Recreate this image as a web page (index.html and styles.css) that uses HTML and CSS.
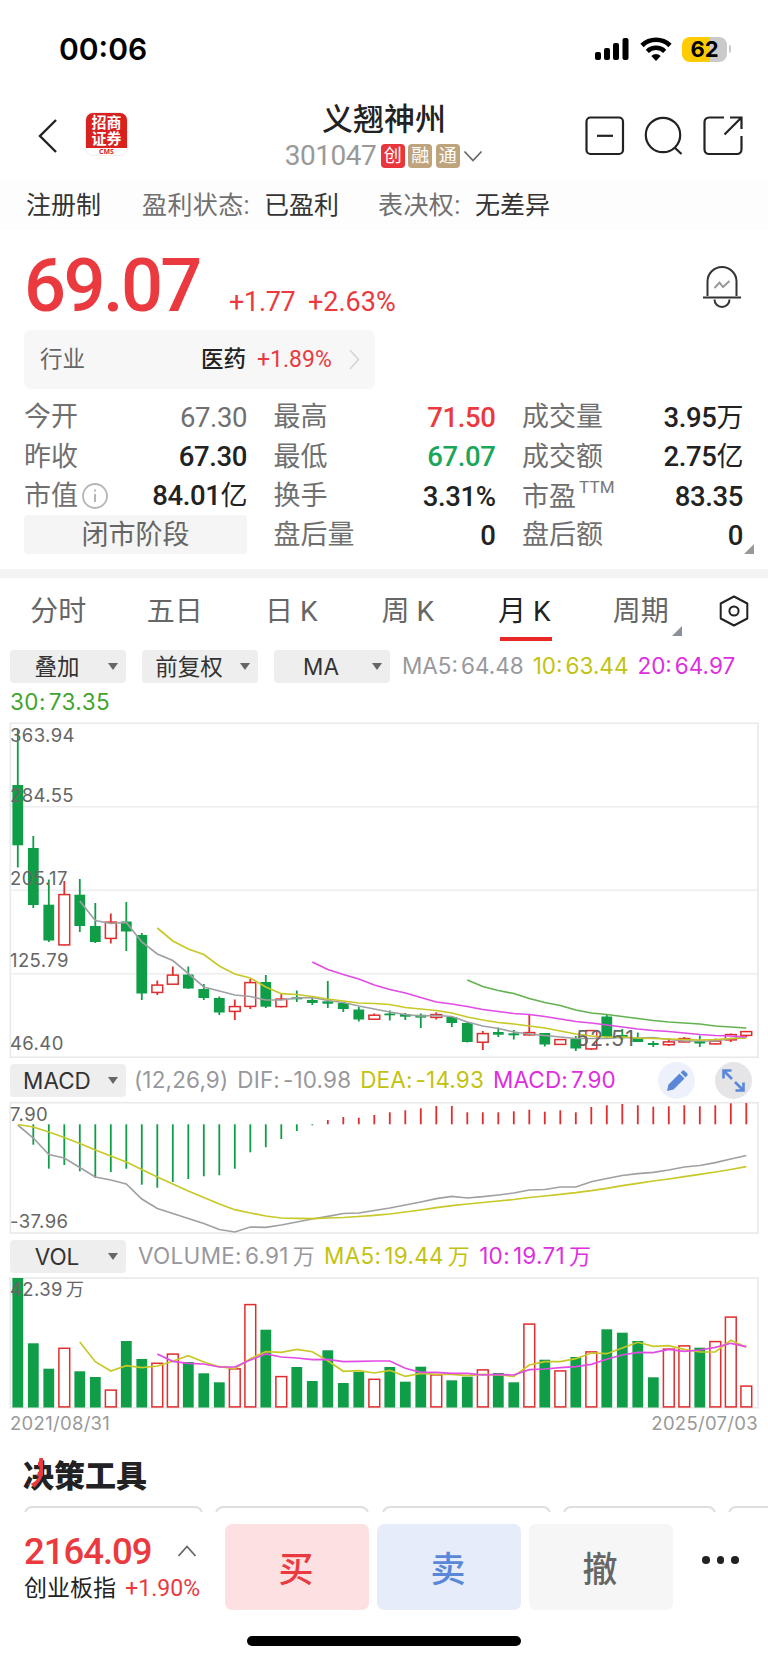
FILE: index.html
```html
<!DOCTYPE html>
<html lang="zh-CN">
<head>
    <meta charset="UTF-8">
    <title>义翘神州 301047</title>
    <link rel="stylesheet" href="styles.css">
</head>
<body>
    <div class="status-bar">
        <span class="time">00:06</span>
        <svg class="signal" width="34" height="22" viewBox="0 0 34 22">
            <rect x="0" y="14" width="6" height="8" rx="2"/>
            <rect x="9" y="10" width="6" height="12" rx="2"/>
            <rect x="18" y="5" width="6" height="17" rx="2"/>
            <rect x="27.500" y="0" width="6" height="22" rx="2"/>
        </svg>
        <svg class="wifi" width="32" height="24" viewBox="0 0 32 24">
            <path d="M2 8.500a20 20 0 0 1 28 0" fill="none" stroke="#000" stroke-width="4.600"/>
            <path d="M7.300 14.300a12.500 12.500 0 0 1 17.400 0" fill="none" stroke="#000" stroke-width="4.400"/>
            <path d="M11.300 19a6.600 6.600 0 0 1 9.400 0L16 24z"/>
        </svg>
        <div class="battery">62</div>
        <div class="battery-tip"></div>
    </div>

    <header class="header">
        <svg class="back" width="20" height="36" viewBox="0 0 20 36"><path d="M18 2L2 18l16 16"/></svg>
        <div class="logo">
            <b>招商<br>证券</b>
            <i>CMS</i>
        </div>
        <div class="title">
            <h1>义翘神州</h1>
            <div class="code">
                <span>301047</span>
                <em class="tag tag-red">创</em>
                <em class="tag">融</em>
                <em class="tag">通</em>
                <svg width="20" height="12" viewBox="0 0 20 12"><path d="M1.500 1.500l8.500 9 8.500-9" fill="none" stroke="#666" stroke-width="1.700"/></svg>
            </div>
        </div>
        <div class="actions">
            <svg width="40" height="40" viewBox="0 0 40 40"><rect x="1.500" y="1.500" width="36.500" height="36.500" rx="4"/><path d="M12 19.800h16"/></svg>
            <svg width="40" height="40" viewBox="0 0 40 40"><circle cx="19" cy="19" r="17.200"/><path d="M30.500 31.500l7 6.500"/></svg>
            <svg width="40" height="40" viewBox="0 0 40 40"><path d="M21 1.500H6a4.500 4.500 0 0 0-4.500 4.500v27.500A4.500 4.500 0 0 0 6 38h28a4.500 4.500 0 0 0 4.500-4.500V20M27 1.500h11.500V13M38 2L21.500 18.500"/></svg>
        </div>
    </header>

    <div class="notice">
        <span class="dark">注册制</span>
        <span class="state">盈利状态:</span>
        <span class="dark">已盈利</span>
        <span class="vote">表决权:</span>
        <span class="dark">无差异</span>
    </div>

    <section class="quote">
        <div class="price-row">
            <span class="price">69.07</span>
            <span class="change">+1.77</span>
            <span class="percent">+2.63%</span>
            <svg class="bell" width="40" height="44" viewBox="0 0 40 44">
                <path d="M5.500 30V15.500a14.500 14.500 0 0 1 29 0V30M1 31.500h38M12.500 33.500a7.500 7.500 0 0 0 15 0" fill="none" stroke="#333" stroke-width="2"/>
                <path d="M12.500 22l5-5.500 3.500 4.500 6.500-6" fill="none" stroke="#999" stroke-width="2"/>
            </svg>
        </div>
        <div class="industry">
            <span>行业</span>
            <b>医药</b>
            <span class="up">+1.89%</span>
            <svg width="11" height="21" viewBox="0 0 11 21"><path d="M1 1l8.500 9.500L1 20" fill="none" stroke="#d4d4d4" stroke-width="1.600"/></svg>
        </div>
        <div class="stats">
            <div class="stat"><label>今开</label><span class="flat">67.30</span></div>
            <div class="stat"><label>最高</label><span class="up">71.50</span></div>
            <div class="stat"><label>成交量</label><span>3.95<u>万</u></span></div>
            <div class="stat"><label>昨收</label><span>67.30</span></div>
            <div class="stat"><label>最低</label><span class="down">67.07</span></div>
            <div class="stat"><label>成交额</label><span>2.75<u>亿</u></span></div>
            <div class="stat"><label>市值</label>
                <svg class="info" width="26" height="26" viewBox="0 0 26 26"><circle cx="13" cy="13" r="12" fill="none" stroke="#b5b5b5" stroke-width="1.800"/><path d="M13 11v8M13 6.500v2" stroke="#b5b5b5" stroke-width="2"/></svg>
                <span>84.01<u>亿</u></span></div>
            <div class="stat"><label>换手</label><span>3.31%</span></div>
            <div class="stat pe"><label>市盈</label><sup>TTM</sup><span>83.35</span></div>
            <div class="phase">闭市阶段</div>
            <div class="stat"><label>盘后量</label><span>0</span></div>
            <div class="stat"><label>盘后额</label><span>0</span></div>
            <div class="corner"></div>
        </div>
    </section>

    <nav class="tabs">
        <a>分时</a>
        <a>五日</a>
        <a>日 K</a>
        <a>周 K</a>
        <a class="active">月 K</a>
        <a class="more">周期</a>
        <svg width="30" height="32" viewBox="0 0 30 32" fill="none" stroke="#222" stroke-width="2"><path d="M15 1.500L28.300 8.500v15L15 30.500 1.700 23.500v-15z" stroke-linejoin="round"/><circle cx="15" cy="16" r="4.600"/></svg>
    </nav>

    <div class="legend">
        <div class="select">叠加</div>
        <div class="select">前复权</div>
        <div class="select">MA</div>
        <span class="c-gray">MA5<i>:</i>64.48</span>
        <span class="c-yellow">10<i>:</i>63.44</span>
        <span class="c-pink">20<i>:</i>64.97</span>
    </div>
    <div class="legend-2"><span class="c-green">30<i>:</i>73.35</span></div>

    <svg id="kline" class="chart" width="768" height="338" viewBox="0 722 768 338"></svg>

    <div class="legend sub">
        <div class="select">MACD</div>
        <span class="c-gray params">(12,26,9)</span>
        <span class="c-gray">DIF<i>:</i>-10.98</span>
        <span class="c-yellow">DEA<i>:</i>-14.93</span>
        <span class="c-pink">MACD<i>:</i>7.90</span>
        <div class="round pencil">
            <svg width="22" height="22" viewBox="0 0 22 22" fill="#5b87d8"><path d="M1 21l1.500-6.500L13.500 3.500l5 5L7.500 19.500zM14.600 2.400l1.800-1.700q1-.8 2 0l2.900 2.900q.8 1 0 2l-1.800 1.800z"/></svg>
        </div>
        <div class="round expand">
            <svg width="23" height="23" viewBox="0 0 23 23" fill="none" stroke="#5b87d8" stroke-width="2.600"><path d="M1.500 9.500v-8h8M2 2l8 8M21.500 13.500v8h-8M21 21l-8-8"/></svg>
        </div>
    </div>
    <svg id="macd" class="chart" width="768" height="136" viewBox="0 1101 768 136"></svg>

    <div class="legend sub vol-legend">
        <div class="select">VOL</div>
        <span class="c-gray">VOLUME<i>:</i>6.91<u>万</u></span>
        <span class="c-yellow">MA5<i>:</i>19.44<u>万</u></span>
        <span class="c-pink">10<i>:</i>19.71<u>万</u></span>
    </div>
    <svg id="vol" class="chart" width="768" height="134" viewBox="0 1276 768 134"></svg>
    <div class="dates"><span>2021/08/31</span><span>2025/07/03</span></div>

    <section class="tools">
        <h2><span class="mark">决</span>策工具</h2>
        <div class="pills">
            <div class="pill p1"></div>
            <div class="pill p2"></div>
            <div class="pill p3"></div>
            <div class="pill p4"></div>
            <div class="pill p5"></div>
        </div>
    </section>

    <footer class="trade">
        <div class="index">
            <div class="index-top">
                <span>2164.09</span>
                <svg width="20" height="12" viewBox="0 0 20 12"><path d="M1.500 11L10 1.500 18.500 11" fill="none" stroke="#666" stroke-width="1.800"/></svg>
            </div>
            <div class="index-name">创业板指 <span>+1.90%</span></div>
        </div>
        <button class="buy">买</button>
        <button class="sell">卖</button>
        <button class="cancel">撤</button>
        <div class="dots"><i></i><i></i><i></i></div>
    </footer>
    <div class="home"></div>

    <script src="charts.js"></script>
</body>
</html>
```
FILE: styles.css
```css
* {
    box-sizing: border-box;
}
body {
    margin: 0;
    width: 768px;
    height: 1663px;
    overflow: hidden;
    background: #fff;
    color: #222;
    font-family: Roboto, "Noto Sans CJK SC", sans-serif;
    line-height: 1;
}
h1, h2 {
    margin: 0;
    font-weight: 500;
}
i, em, u {
    font-style: normal;
    text-decoration: none;
}
.up {
    color: #ea3a40 !important;
}
.down {
    color: #1ba65a !important;
}

/* status bar */
.status-bar {
    display: flex;
    align-items: center;
    height: 98px;
    padding-left: 59px;
}
.time {
    width: 536px;
    font: 600 30px/1 Inter, sans-serif;
    color: #000;
}
.wifi {
    margin-left: 11px;
}
.battery {
    width: 45px;
    height: 25px;
    margin-left: 10px;
    border-radius: 8px;
    background: linear-gradient(90deg, #ffcc00 28px, #cacaca 28px);
    font: 700 22px/25px Inter, sans-serif;
    color: #000;
    text-align: center;
}
.battery-tip {
    width: 2px;
    height: 8px;
    margin-left: 2px;
    border-radius: 0 2px 2px 0;
    background: #cacaca;
}

/* header */
.header {
    display: flex;
    height: 82px;
    padding-left: 38px;
}
.back {
    margin-top: 20px;
    fill: none;
    stroke: #222;
    stroke-width: 2.4;
}
.logo {
    width: 43px;
    height: 44px;
    margin: 14px 0 0 27px;
    border: 1px solid #eee;
    border-radius: 8px;
    background: linear-gradient(#d8221f 35px, #fff 35px);
    text-align: center;
    color: #fff;
    overflow: hidden;
}
.logo b {
    display: block;
    height: 35px;
    padding-top: 2px;
    font-size: 15px;
    line-height: 16px;
}
.logo i {
    display: block;
    font: bold 7px/7px "Open Sans", sans-serif;
    color: #d8221f;
}
.title {
    width: 240px;
    margin-left: 136px;
    padding-top: 6px;
    display: flex;
    flex-direction: column;
    align-items: center;
}
h1 {
    font-size: 31px;
    line-height: 32px;
}
.code {
    display: flex;
    align-items: center;
    margin-top: 8px;
    height: 24px;
}
.code span {
    width: 96px;
    font-size: 28px;
    letter-spacing: -0.5px;
    color: #999;
}
.tag {
    width: 24px;
    height: 24px;
    margin-right: 3.500px;
    border-radius: 4px;
    background: #bfa37c;
    color: #fff;
    font-size: 18px;
    line-height: 23px;
    text-align: center;
}
.tag-red {
    background: #e8363c;
}
.actions {
    display: flex;
    gap: 19px;
    margin: 18px 0 0 81px;
}
.actions svg {
    fill: none;
    stroke: #222;
    stroke-width: 2.2;
}
.notice {
    display: flex;
    align-items: center;
    height: 50px;
    padding: 0 0 0 26px;
    background: #fdfdfd;
    color: #707070;
    font-size: 25px;
}
.notice .dark {
    color: #333;
}
.state {
    width: 122px;
    margin-left: 41px;
    letter-spacing: 0.4px;
}
.vote {
    width: 97px;
    margin-left: 39px;
    letter-spacing: 0.4px;
}

/* quote */
.quote {
    height: 339px;
    padding: 0 24px;
}
.price-row {
    display: flex;
    align-items: baseline;
    height: 100px;
    padding-top: 19px;
    color: #ea3a40;
}
.price {
    width: 205px;
    font-size: 74px;
    font-weight: 500;
    letter-spacing: -2.6px;
}
.change {
    width: 79px;
    font-size: 27px;
    letter-spacing: -0.3px;
}
.percent {
    font-size: 27px;
}
.bell {
    margin: 0 2px 0 auto;
    align-self: flex-start;
    position: relative;
    top: 17px;
}
.industry {
    display: flex;
    align-items: center;
    width: 351px;
    height: 59px;
    padding: 0 15px 0 16px;
    border-radius: 7px;
    background: #f7f7f7;
    color: #666;
    font-size: 22.500px;
}
.industry b {
    margin: 0 11px 0 auto;
    font-weight: 500;
    color: #222;
}
.industry .up {
    width: 92px;
    font-size: 23px;
}
.stats {
    position: relative;
    display: grid;
    grid-template-columns: 223px 222px 221px;
    grid-auto-rows: 39.400px;
    column-gap: 26.500px;
    margin-top: 8px;
}
.stat {
    display: flex;
    align-items: center;
    padding-top: 2px;
    font-size: 27px;
    white-space: nowrap;
}
.stat label {
    color: #707070;
}
.stat span {
    margin-left: auto;
    font-size: 27.500px;
    font-weight: 500;
    letter-spacing: -0.4px;
}
.stat u {
    font-size: 27px;
    font-weight: 400;
}
.stat .flat {
    color: #707070;
    font-weight: 400;
}
.info {
    margin-left: 4px;
}
.pe label {
    padding-top: 3px;
}
sup {
    align-self: flex-start;
    margin: 0 0 0 3px;
    font-size: 17px;
    letter-spacing: 0.2px;
    line-height: 18px;
    color: #777;
}
.phase {
    height: 39px;
    border-radius: 4px;
    background: #f5f5f5;
    color: #666;
    font-size: 27px;
    line-height: 40px;
    text-align: center;
}
.corner {
    position: absolute;
    right: -10px;
    bottom: 1px;
    border-left: 10px solid transparent;
    border-bottom: 10px solid #999;
}

/* period tabs */
.tabs {
    display: flex;
    height: 80px;
    padding-top: 8px;
    background: linear-gradient(#f4f4f4 9px, #fff 9px);
    font-size: 28px;
    color: #666;
}
.tabs a {
    position: relative;
    width: 116.500px;
    height: 66px;
    line-height: 70px;
    text-align: center;
}
.tabs .active {
    color: #222;
}
.tabs .active::after {
    content: '';
    position: absolute;
    left: 34px;
    bottom: 2px;
    width: 52px;
    height: 4px;
    background: #e92727;
}
.tabs .more::after {
    content: '';
    position: absolute;
    left: 89px;
    bottom: 7px;
    border-left: 10px solid transparent;
    border-bottom: 10px solid #8c9098;
}
.tabs svg {
    margin: 18px 0 0 20px;
}

/* legends */
.legend, .legend-2 {
    display: flex;
    align-items: center;
    height: 34px;
    padding-left: 10px;
    font-family: Inter, "Noto Sans CJK SC", sans-serif;
    font-size: 22.500px;
    white-space: nowrap;
}
.legend span {
    margin-right: 9px;
}
.legend i, .legend-2 i {
    margin-right: 3px;
}
.legend u {
    margin-left: 4px;
    font-size: 22px;
}
.legend-2 {
    height: 39px;
    letter-spacing: 0.4px;
}
.select {
    position: relative;
    width: 116px;
    height: 33px;
    margin-right: 16px;
    padding-right: 22px;
    border-radius: 4px;
    background: #eee;
    color: #333;
    line-height: 33px;
    text-align: center;
}
.select::after {
    content: '';
    position: absolute;
    right: 8px;
    top: 13px;
    border: 5px solid transparent;
    border-top: 7px solid #666;
    border-bottom: 0;
}
.select + span {
    margin-left: -4px;
}
.c-gray { color: #98989d; }
.c-yellow { color: #c2c20f; }
.c-pink { color: #dd2ee0; }
.c-green { color: #43a32d; }
.chart {
    display: block;
}
.chart text {
    font-family: Inter, "Noto Sans CJK SC", sans-serif;
    font-size: 18.500px;
    letter-spacing: 0.4px;
    fill: #666;
}
.sub {
    height: 41px;
}
.sub span {
    letter-spacing: 0.15px;
}
.sub .select + span {
    margin-left: -8px;
}
.round {
    display: flex;
    align-items: center;
    justify-content: center;
    width: 37px;
    height: 37px;
    border-radius: 50%;
}
.pencil {
    margin-left: auto;
    background: #ecf1fb;
}
.expand {
    margin: 0 16px 0 20px;
    background: #e5e5e7;
}
.vol-legend {
    height: 39px;
}
.vol-legend span {
    letter-spacing: 0.3px;
}
.vol-legend .select + span {
    margin-left: -4px;
}
.dates {
    display: flex;
    justify-content: space-between;
    padding: 4px 10px 0 10px;
    height: 36px;
    font: 18.500px/19px Inter, sans-serif;
    letter-spacing: 0.3px;
    color: #999;
}

/* tools */
.tools {
    height: 66px;
    overflow: hidden;
}
h2 {
    height: 60px;
    padding: 15px 0 0 23px;
    font-size: 31px;
    font-weight: 900;
    line-height: 31px;
}
.mark {
    position: relative;
}
.mark::after {
    content: '决';
    position: absolute;
    left: 0;
    top: 0;
    color: #ea3a40;
    line-height: 31px;
    clip-path: polygon(15px 0, 20px 0, 20px 17px, 17px 23px, 8px 34px, 5px 26px, 13px 20px, 15px 14px);
}
.pills {
    display: flex;
    gap: 12.500px;
    padding-left: 24px;
}
.pill {
    flex: none;
    height: 30px;
    border: 2px solid #dedede;
    border-radius: 8px;
}
.p1 { width: 178.500px; }
.p2 { width: 154px; }
.p3 { width: 169px; }
.p4 { width: 152.500px; }
.p5 { width: 160px; }

/* trade bar */
.trade {
    display: flex;
    gap: 8px;
    height: 124px;
    padding: 12px 0 0 24px;
    background: #fff;
}
.index {
    width: 193px;
    color: #ea3a40;
}
.index-top {
    display: flex;
    justify-content: space-between;
    padding: 10px 20px 0 0;
    font-size: 36.500px;
    font-weight: 500;
    letter-spacing: -1px;
}
.index-top svg {
    margin-top: 11px;
}
.index-name {
    display: flex;
    justify-content: space-between;
    margin-top: 6px;
    padding-right: 17px;
    font-size: 23px;
    color: #222;
}
.index-name span {
    color: #ea3a40;
}
.trade button {
    width: 144px;
    height: 86px;
    padding: 0 2px 2px 0;
    border: 0;
    border-radius: 7px;
    font-family: "Noto Sans CJK SC", sans-serif;
    font-size: 35px;
    font-weight: 500;
}
.buy {
    background: #fce0e2;
    color: #ea3a40;
}
.sell {
    background: #e6ecf9;
    color: #5b87d8;
}
.cancel {
    background: #f6f6f6;
    color: #666;
}
.dots {
    display: flex;
    gap: 7px;
    padding: 32px 0 0 21px;
}
.dots i {
    width: 7.500px;
    height: 7.500px;
    border-radius: 50%;
    background: #222;
}
.home {
    width: 274px;
    height: 10px;
    margin: 0 auto;
    border-radius: 5px;
    background: #000;
}
```
FILE: charts.js
```js
const GREEN = '#0f9d48';
const RED = '#e02d2d';
const GRAY = '#a0a0a4';
const YELLOW = '#c8c826';
const PINK = '#e24be6';
const LEAF = '#62b34f';

const x = i => 17.8 + i * 15.5;

function rect(x, y, w, h, attrs) {
    return `<rect x="${x}" y="${y}" width="${w}" height="${h}" ${attrs}/>`;
}
function vline(cx, y1, y2, color) {
    return `<path d="M${cx} ${y1}V${y2}" stroke="${color}" stroke-width="1.8"/>`;
}
function curve(start, ys, color) {
    const pts = ys.map((y, i) => x(start + i) + ',' + y).join(' ');
    return `<polyline points="${pts}" fill="none" stroke="${color}" stroke-width="1.7"/>`;
}
function label(tx, y, text, attrs = '') {
    return `<text x="${tx}" y="${y}" ${attrs}>${text}</text>`;
}
function frame(top, bottom, grid = []) {
    let s = rect(10.3, top, 747.7, bottom - top, 'fill="none" stroke="#e9e9eb" stroke-width="1.6"');
    grid.forEach(y => s += `<path d="M10 ${y}H758" stroke="#ededef" stroke-width="1.6"/>`);
    return s;
}
function bar(i, top, bottom, up) {
    if (up) {
        return rect(x(i) - 5.4, top + 0.6, 10.8, Math.max(bottom - top - 1.2, 1), `fill="#fff" stroke="${RED}" stroke-width="1.5"`);
    }
    return rect(x(i) - 5.4, top, 10.8, bottom - top, `fill="${GREEN}"`);
}

// body top, body bottom, high, low, 1 = up
const candles = [
    [785, 845.3, 729, 867.5, 0], [848, 905, 836, 908, 0], [904.7, 940.5, 879.5, 942, 0], [894, 945.5, 881, 945.5, 1],
    [894.7, 926, 879, 932, 0], [926, 942, 903, 943, 0], [921.5, 939, 913.5, 943.5, 1], [921.5, 931.5, 902, 951, 0],
    [935, 993.5, 933, 1000, 0], [984.5, 993, 980.5, 995, 1], [974.5, 984.8, 966.5, 985, 1], [974.5, 988.5, 966.5, 989, 0],
    [989, 998, 984, 1000, 0], [998, 1012.5, 996.5, 1015, 0], [1006, 1012, 999.5, 1020, 1], [982, 1007, 979, 1009, 1],
    [982, 1006.7, 975, 1008, 0], [998.5, 1007.2, 994, 1007.5, 1], [997.3, 999.3, 990.5, 1002, 0], [1000, 1003, 998, 1005, 0],
    [1001.3, 1003.7, 981, 1008, 0], [1003, 1009, 1002, 1012, 0], [1009.5, 1019.5, 1007, 1021.5, 0], [1014.6, 1019.8, 1013.5, 1020, 1],
    [1013.5, 1015.3, 1010.5, 1020.5, 0], [1014, 1016.7, 1013, 1020, 0], [1014.8, 1017.6, 1013.5, 1028, 0], [1014, 1018, 1012.3, 1019.5, 1],
    [1017, 1023, 1016, 1027, 0], [1023, 1042, 1022, 1042.5, 0], [1033, 1042.8, 1031, 1050, 1], [1032, 1034.7, 1027.5, 1037, 0],
    [1033.3, 1035.3, 1030, 1039.5, 0], [1032, 1035.5, 1015, 1035.5, 1], [1033, 1044.5, 1033, 1046.5, 0], [1039, 1045, 1039, 1045, 1],
    [1039, 1048.5, 1036, 1051, 0], [1030, 1049.5, 1030, 1050, 1], [1016.5, 1037, 1015, 1038, 0], [1035, 1037, 1029, 1040, 0],
    [1038, 1042, 1032.5, 1042, 0], [1043, 1045, 1041, 1047, 0], [1041.3, 1045.3, 1038, 1046, 1], [1038, 1042.5, 1037, 1042.5, 1],
    [1041, 1043.5, 1035.5, 1047, 0], [1040.5, 1044.5, 1038.5, 1044.5, 1], [1034, 1040.5, 1033.5, 1042, 1], [1031, 1036, 1031, 1037, 1]
];

let k = frame(723.3, 1057.3, [806.7, 890.3, 973.7]);
candles.forEach(([top, bottom, high, low, up], i) => {
    k += vline(x(i), high, low, up ? RED : GREEN) + bar(i, top, bottom, up);
});
k += curve(4, [901, 920.5, 923.5, 922.5, 942, 954, 960.5, 973.5, 987, 991, 995, 996.5, 1000, 1000, 998, 997.5, 1000.5, 1002.5, 1006, 1009, 1012, 1014.5, 1016, 1015.5, 1016.5, 1022, 1026, 1028.5, 1032, 1034, 1035.5, 1037, 1038.5, 1038.5, 1038.5, 1037.5, 1038, 1037.5, 1039.5, 1041, 1041, 1041, 1038.5, 1037.5], GRAY);
k += curve(9, [928, 941, 949, 954.5, 966, 974, 978, 987, 993.7, 994.5, 996.5, 999, 1001, 1003, 1003.5, 1004.5, 1007.5, 1009, 1010.5, 1013, 1017, 1020, 1022.5, 1024, 1026, 1028, 1031, 1034, 1036, 1037, 1037, 1038, 1038.5, 1039, 1039.5, 1040, 1039.5, 1038.5, 1038], YELLOW);
k += curve(19, [962, 969.5, 974.5, 979, 985, 989.5, 993, 997.5, 1002, 1004, 1006.5, 1009.5, 1011.5, 1013.5, 1014.5, 1016.5, 1019, 1021.5, 1023, 1025, 1027, 1029, 1030.5, 1031.5, 1033, 1034.5, 1035.5, 1036, 1037], PINK);
k += curve(29, [980, 986.5, 990.5, 993.5, 998.5, 1002.5, 1005.5, 1010, 1013, 1014.5, 1016.5, 1018.5, 1020.5, 1022, 1023, 1024, 1026, 1027, 1028], LEAF);
k += label(10, 741.7, '363.94') + label(10, 802.3, '284.55') + label(10, 884.7, '205.17') + label(10, 967, '125.79') + label(10, 1050, '46.40');
k += label(576, 1046, '52.51', 'style="font-size:21.5px;letter-spacing:1px"');
document.getElementById('kline').innerHTML = k;

// macd histogram, one end of each bar; the other is the zero line
const zero = 1124.3;
const hist = [1124.3, 1144.7, 1168.7, 1165, 1171.3, 1178, 1172, 1168.7, 1184.7, 1187.7, 1182, 1179, 1176.3, 1175.3, 1168.7, 1152.3, 1147.3, 1139, 1131, 1125.3, 1120, 1117, 1117.7, 1115, 1112.3, 1110.3, 1108.3, 1106, 1106, 1112.3, 1112.3, 1112.3, 1111.3, 1109.7, 1111.7, 1110.3, 1112.3, 1107, 1105.3, 1104, 1105.3, 1106.7, 1106.3, 1105.3, 1106.3, 1105.3, 1103.3, 1103];
let m = frame(1102.7, 1233);
hist.forEach((y, i) => m += vline(x(i), zero, y, y > zero ? GREEN : RED));
m += curve(0, [1125, 1138, 1154.5, 1158, 1167.5, 1177, 1180, 1184, 1199, 1208.5, 1213.5, 1218.5, 1223.5, 1229.5, 1232, 1227, 1227.3, 1225, 1222, 1219, 1216.3, 1213.5, 1213, 1210.5, 1208, 1205, 1202, 1198.7, 1196.3, 1198, 1196.7, 1195, 1193, 1190, 1189.5, 1187, 1187, 1181.7, 1178.5, 1175.5, 1173.7, 1172.3, 1170, 1167, 1165.5, 1162.7, 1159, 1155.5], GRAY);
m += curve(0, [1124.5, 1127, 1132, 1137.5, 1143.5, 1150, 1156, 1162, 1169.5, 1177, 1184, 1191, 1197.5, 1204, 1209.7, 1213, 1216, 1218, 1218.3, 1218.7, 1218, 1217.5, 1216.5, 1215.3, 1214, 1212, 1210, 1207.7, 1205.7, 1204, 1202.5, 1201, 1199.5, 1197.5, 1196, 1194.3, 1192.7, 1190.7, 1188.3, 1185.7, 1183.3, 1181, 1179, 1176.7, 1174.3, 1172, 1169.5, 1166.7], YELLOW);
m += label(10, 1120.7, '7.90') + label(10, 1228.3, '-37.96');
document.getElementById('macd').innerHTML = m;

// volume bars: top, 1 = up
const volumes = [
    [1278, 0], [1343.3, 0], [1368.7, 0], [1347.7, 1], [1371.3, 0], [1377, 0], [1389.5, 1], [1341, 0],
    [1359, 0], [1362.7, 1], [1353.5, 1], [1362, 0], [1373.3, 0], [1382.3, 0], [1368.3, 1], [1304, 1],
    [1329.7, 0], [1376, 1], [1367, 0], [1381, 0], [1350.3, 0], [1383, 0], [1372, 0], [1378.7, 1],
    [1367, 0], [1381.7, 0], [1366.7, 0], [1374.3, 1], [1380.3, 0], [1376.7, 0], [1369.3, 1], [1373, 0],
    [1382.3, 0], [1323.5, 1], [1359.7, 0], [1370.3, 1], [1357, 0], [1351.3, 1], [1329.3, 0], [1332.7, 0],
    [1341, 0], [1377.3, 0], [1348.5, 1], [1345.3, 1], [1347.7, 0], [1341, 1], [1316.5, 1], [1385.5, 1]
];
let v = frame(1278, 1407.7);
volumes.forEach(([top, up], i) => v += bar(i, top, 1407.5, up));
v += curve(4, [1342, 1361.7, 1371, 1365.7, 1367.7, 1366, 1361.3, 1355.7, 1362, 1366.7, 1368.7, 1358.7, 1351.7, 1352.3, 1349.3, 1351.7, 1360.7, 1371.3, 1370.7, 1373, 1370.3, 1376.3, 1373.3, 1374.3, 1374.3, 1375.7, 1374.3, 1375, 1376.3, 1365, 1361.7, 1361.7, 1358.7, 1353, 1353.7, 1348, 1342.3, 1346.3, 1345.7, 1349.3, 1352, 1352, 1340.3, 1347.3], YELLOW);
v += curve(9, [1354, 1361.3, 1363.3, 1364, 1367, 1367, 1360, 1354, 1357, 1358, 1359.7, 1359.3, 1361.7, 1361.3, 1361, 1361, 1368.3, 1372.3, 1372.3, 1373.3, 1373.3, 1375, 1374.3, 1375, 1369.7, 1369, 1367.7, 1366.7, 1364.3, 1359.3, 1355, 1352.3, 1352.7, 1349.3, 1351.3, 1350, 1347.3, 1343.3, 1346.7], PINK);
v += label(10, 1296.3, '42.39<tspan dx="3" font-size="18">万</tspan>');
document.getElementById('vol').innerHTML = v;
```
